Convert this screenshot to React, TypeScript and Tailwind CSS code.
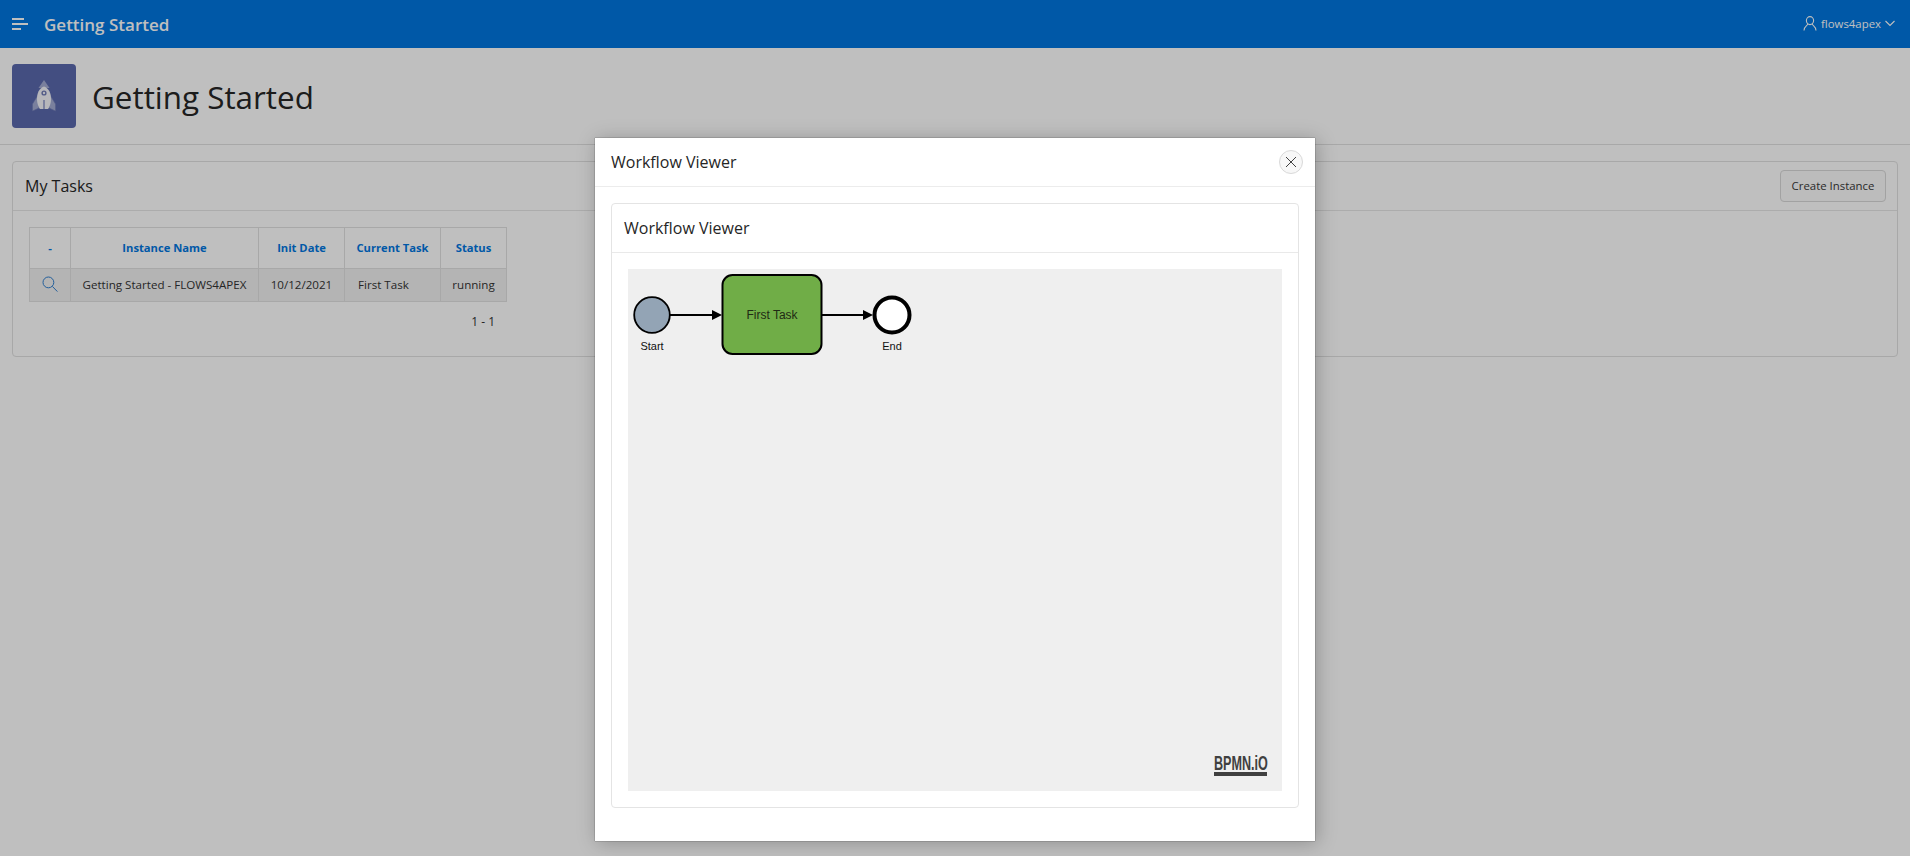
import React from 'react';

const font = 'font-["Open_Sans",sans-serif]';

function MenuIcon() {
  return (
    <svg width="17" height="13" viewBox="0 0 17 13" className="text-white">
      <rect x="0" y="0" width="12" height="2" fill="currentColor" />
      <rect x="0" y="5" width="16" height="2" fill="currentColor" />
      <rect x="0" y="10" width="9" height="2" fill="currentColor" />
    </svg>
  );
}

function RocketIcon() {
  return (
    <svg width="24" height="32" viewBox="0 0 24 32">
      <path d="M6 15 L0.5 24 L0.5 31 L7 28 Z" fill="#a3abd2" stroke="#6f7ab5" strokeWidth="0.6" />
      <path d="M18 15 L23.5 24 L23.5 31 L17 28 Z" fill="#a3abd2" stroke="#6f7ab5" strokeWidth="0.6" />
      <path d="M12 0 L6.5 8 L17.5 8 Z" fill="#a3abd2" />
      <path d="M12 6.5 C7 8.5 5 13 5 19 C5 24 7 28 8 29 L16 29 C17 28 19 24 19 19 C19 13 17 8.5 12 6.5 Z" fill="#f4f5fa" />
      <circle cx="12" cy="13" r="2.6" fill="#6f7ab5" />
      <circle cx="12" cy="13" r="1.2" fill="#f4f5fa" />
      <rect x="11.5" y="20" width="1" height="9" fill="#5a68ad" />
    </svg>
  );
}

function UserIcon() {
  return (
    <svg width="14" height="15" viewBox="0 0 14 15" fill="none" stroke="white" strokeWidth="1.1">
      <ellipse cx="7" cy="4.6" rx="3.6" ry="4" />
      <path d="M4.6 8 C4.6 10 1 10.2 1 14.5 M9.4 8 C9.4 10 13 10.2 13 14.5" />
    </svg>
  );
}

function SearchIcon() {
  return (
    <svg width="16" height="16" viewBox="0 0 16 16" fill="none" stroke="#2f7fd0" strokeWidth="1">
      <circle cx="6.4" cy="6.4" r="5.4" />
      <path d="M10.4 10.4 L15.4 15.6" />
    </svg>
  );
}

function Diagram() {
  return (
    <svg width="654" height="522" viewBox="0 0 654 522" className="block">
      <circle cx="24" cy="46" r="17.8" fill="#93a4b5" stroke="black" strokeWidth="1.8" />
      <path d="M42 46 H86" stroke="black" strokeWidth="2" />
      <path d="M84 41 L94 46 L84 51 Z" fill="black" />
      <rect x="94.5" y="6" width="99" height="79" rx="10" fill="#70ad47" stroke="black" strokeWidth="2" />
      <path d="M194 46 H237" stroke="black" strokeWidth="2" />
      <path d="M235 41 L245 46 L235 51 Z" fill="black" />
      <circle cx="264" cy="46" r="17.5" fill="white" stroke="black" strokeWidth="4" />
      <text x="144" y="50" textAnchor="middle" fontFamily="Liberation Sans, Arial, sans-serif" fontSize="12" fill="#1f2a14">First Task</text>
      <text x="24" y="81" textAnchor="middle" fontFamily="Liberation Sans, Arial, sans-serif" fontSize="11" fill="#111">Start</text>
      <text x="264" y="81" textAnchor="middle" fontFamily="Liberation Sans, Arial, sans-serif" fontSize="11" fill="#111">End</text>
    </svg>
  );
}

const headers = [
  { label: '-', w: 'w-[41px]' },
  { label: 'Instance Name', w: 'w-[188px]' },
  { label: 'Init Date', w: 'w-[86px]' },
  { label: 'Current Task', w: 'w-[96px]' },
  { label: 'Status', w: 'w-[66px]' },
];

export default function App() {
  return (
    <div className={`relative h-screen w-full overflow-hidden bg-[#ffffff] ${font}`}>
      {/* page */}
      <header className="flex h-12 items-center justify-between bg-[#0076df] pl-3 pr-[15px] text-white">
        <div className="flex items-center gap-[15px]">
          <MenuIcon />
          <span className="translate-y-px text-[17px] font-semibold">Getting Started</span>
        </div>
        <div className="flex items-center gap-1 text-[11.4px]">
          <UserIcon />
          <span>flows4apex</span>
          <svg width="10" height="7" viewBox="0 0 10 7" fill="none" stroke="white" strokeWidth="1.1">
            <path d="M0.5 1 L5 5.5 L9.5 1" />
          </svg>
        </div>
      </header>

      <div className="flex h-[97px] items-center gap-4 border-b border-[#e0e0e0] px-3">
        <div className="flex h-16 w-16 items-center justify-center rounded bg-[#5a68ad]">
          <RocketIcon />
        </div>
        <h1 className="translate-y-px text-[31.4px] font-normal text-[#262626]">Getting Started</h1>
      </div>

      <section className="mx-3 mt-4 h-[196px] rounded-sm border border-[#e0e0e0] bg-white">
        <div className="flex h-[49px] items-center justify-between border-b border-[#e6e6e6] pl-3 pr-[11px]">
          <h2 className="text-base text-[#262626]">My Tasks</h2>
          <button className="h-8 w-[106px] rounded-sm border border-[#d8d8d8] bg-[#fbfbfb] text-[11.4px] text-[#383838]">
            Create Instance
          </button>
        </div>
        <div className="px-4 pt-4">
          <table className="table-fixed border-collapse text-[11.6px]">
            <thead>
              <tr className="h-[41px]">
                {headers.map((h) => (
                  <th key={h.label} className={`${h.w} border border-[#e0e0e0] bg-white text-center text-[11.2px] font-bold text-[#0076df]`}>
                    {h.label}
                  </th>
                ))}
              </tr>
            </thead>
            <tbody>
              <tr className="h-[33px] bg-[#f0f0f0] text-[#333]">
                <td className="border border-[#e0e0e0] text-center">
                  <span className="inline-flex -translate-y-0.5 align-middle"><SearchIcon /></span>
                </td>
                <td className="border border-[#e0e0e0] text-center">Getting Started - FLOWS4APEX</td>
                <td className="border border-[#e0e0e0] text-center">10/12/2021</td>
                <td className="border border-[#e0e0e0] pl-[13px]">First Task</td>
                <td className="border border-[#e0e0e0] text-center">running</td>
              </tr>
            </tbody>
          </table>
          <div className="w-[478px] pt-[12px] pr-3 text-right text-xs text-[#333]">1 - 1</div>
        </div>
      </section>

      {/* modal overlay */}
      <div className="absolute inset-0 bg-black/25" />

      {/* dialog */}
      <div className="absolute left-[595px] top-[138px] h-[703px] w-[720px] bg-white shadow-[0_0_1px_rgba(0,0,0,0.7),2px_2px_18px_rgba(0,0,0,0.25)]">
        <div className="flex h-[49px] items-center justify-between border-b border-[#ececec] pl-4 pr-3">
          <h2 className="text-base text-[#262626]">Workflow Viewer</h2>
          <button className="flex h-6 w-6 items-center justify-center rounded-full border border-[#d9d9d9] bg-[#f7f7f7]">
            <svg width="12" height="12" viewBox="0 0 12 12" fill="none" stroke="#404040" strokeWidth="1">
              <path d="M1 1 L11 11 M11 1 L1 11" />
            </svg>
          </button>
        </div>
        <div className="pl-4 pr-[16px] pt-4">
          <div className="h-[605px] rounded-sm border border-[#e4e4e4] bg-white">
            <div className="flex h-[49px] items-center border-b border-[#e9e9e9] pl-3">
              <h3 className="text-base text-[#262626]">Workflow Viewer</h3>
            </div>
            <div className="px-4 pt-4">
              <div className="relative h-[522px] bg-[#efefef]">
                <Diagram />
                {/* bpmn.io watermark */}
                <div className="absolute right-[15px] top-[485px] w-[53px] border-b-4 border-[#404040]">
                  <span className='block w-max origin-left scale-x-[0.63] font-["Liberation_Sans",sans-serif] text-[20px] font-bold leading-[18px] text-[#404040]'>
                    BPMN.iO
                  </span>
                </div>
              </div>
            </div>
          </div>
        </div>
      </div>
    </div>
  );
}
